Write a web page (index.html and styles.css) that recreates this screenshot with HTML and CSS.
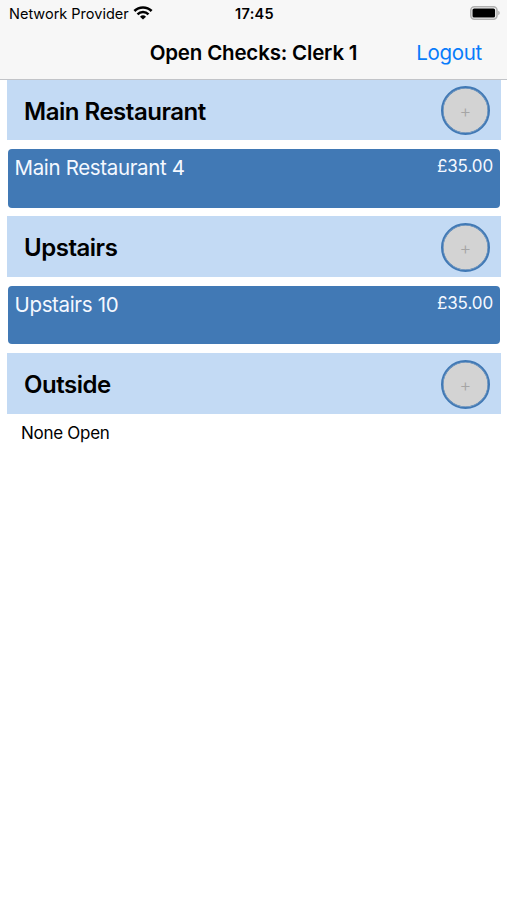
FILE: index.html
```
<!DOCTYPE html>
<html lang="en">
<head>
  <meta charset="UTF-8">
  <meta name="viewport" content="width=device-width, initial-scale=1.0">
  <title>Open Checks</title>
  <link rel="stylesheet" href="styles.css">
</head>
<body>
  <header class="header">
    <div class="status">
      <div class="carrier">
        <span class="provider">Network Provider</span>
        <svg class="wifi" width="20" height="14" viewBox="0 0 20 14">
          <path d="M1.4 5a12.2 12.2 0 0 1 17.2 0" fill="none" stroke="#000" stroke-width="2.6"/>
          <path d="M4.5 8.3a7.8 7.8 0 0 1 11 0" fill="none" stroke="#000" stroke-width="2.5"/>
          <path d="M10 13.6L7 10.7a4.3 4.3 0 0 1 6 0z"/>
        </svg>
      </div>
      <span class="time">17:45</span>
      <svg class="battery" width="30" height="14" viewBox="0 0 30 14">
        <rect x="0.8" y="0.8" width="26.2" height="12.4" rx="3.6" fill="none" stroke="#b0b0b0" stroke-width="1.6"/>
        <rect x="2.5" y="2.4" width="22.6" height="9.2" rx="1.6"/>
        <path d="M28.2 4.8q1.6.6 1.6 2.2t-1.6 2.2z" fill="#b0b0b0"/>
      </svg>
    </div>
    <div class="navbar">
      <h1 class="title">Open Checks: Clerk 1</h1>
      <a class="logout" href="#">Logout</a>
    </div>
  </header>
  <main class="checks">
    <section class="area">
      <div class="area-header">
        <h2 class="area-name">Main Restaurant</h2>
        <button class="add">+</button>
      </div>
      <div class="check">
        <span class="check-name">Main Restaurant 4</span>
        <span class="price">£35.00</span>
      </div>
    </section>
    <section class="area">
      <div class="area-header">
        <h2 class="area-name">Upstairs</h2>
        <button class="add">+</button>
      </div>
      <div class="check">
        <span class="check-name">Upstairs 10</span>
        <span class="price">£35.00</span>
      </div>
    </section>
    <section class="area">
      <div class="area-header">
        <h2 class="area-name">Outside</h2>
        <button class="add">+</button>
      </div>
      <p class="empty">None Open</p>
    </section>
  </main>
</body>
</html>
```
FILE: styles.css
```
* {
  box-sizing: border-box;
}

body {
  margin: 0;
  background: #fff;
  color: #000;
  font-family: Inter, "Liberation Sans", sans-serif;
}

.header {
  height: 79.5px;
  background: #f7f7f7;
  border-bottom: 1px solid #c2c4c8;
}

.status {
  height: 26px;
  padding: 0 7px 0 9px;
  display: grid;
  grid-template-columns: 1fr auto 1fr;
  align-items: center;
}

.carrier {
  display: flex;
  align-items: center;
  gap: 4px;
}

.provider {
  padding-top: 1px;
  font-size: 14.5px;
  white-space: nowrap;
}

.time {
  padding-top: 1px;
  font-size: 14.5px;
  font-weight: 600;
  letter-spacing: .3px;
}

.battery {
  justify-self: end;
}

.navbar {
  height: 52px;
  padding: 0 25px;
  display: grid;
  grid-template-columns: 1fr auto 1fr;
  align-items: center;
}

.title {
  grid-column: 2;
  margin: 0;
  font-size: 20.5px;
  font-weight: 600;
  letter-spacing: -.18px;
}

.logout {
  justify-self: end;
  color: #087cfb;
  font-size: 20.5px;
  letter-spacing: -.3px;
  text-decoration: none;
}

.checks {
  padding: 0 6px 0 7px;
}

.area {
  height: 136.7px;
}

.area-header {
  height: 60.8px;
  padding: 1.6px 11px 0 17px;
  display: flex;
  align-items: center;
  justify-content: space-between;
  background: #c3daf4;
}

.area-name {
  margin: 0;
  padding-top: 1px;
  font-size: 24px;
  font-weight: 600;
  letter-spacing: -.48px;
}

.add {
  width: 49px;
  height: 49px;
  padding: 2px 0 0;
  border: 2px solid #4179b5;
  border-radius: 50%;
  box-shadow: inset 0 0 0 .5px #4179b5;
  background: #d3d3d3;
  color: #a5a5a5;
  font-family: inherit;
  font-size: 18px;
  font-weight: 300;
}

.check {
  height: 58.7px;
  margin: 8.7px 1px 0;
  padding: 7px 7px 0 6.5px;
  display: flex;
  justify-content: space-between;
  border-radius: 4px;
  background: #4179b5;
  color: #f4f8ff;
}

.check-name {
  font-size: 20.5px;
  line-height: 24px;
  letter-spacing: -.34px;
}

.price {
  font-size: 17px;
  line-height: 20px;
  letter-spacing: -.1px;
}

.empty {
  margin: 0;
  padding: 9px 14px;
  font-size: 17px;
  line-height: 21px;
  letter-spacing: -.28px;
}
```
